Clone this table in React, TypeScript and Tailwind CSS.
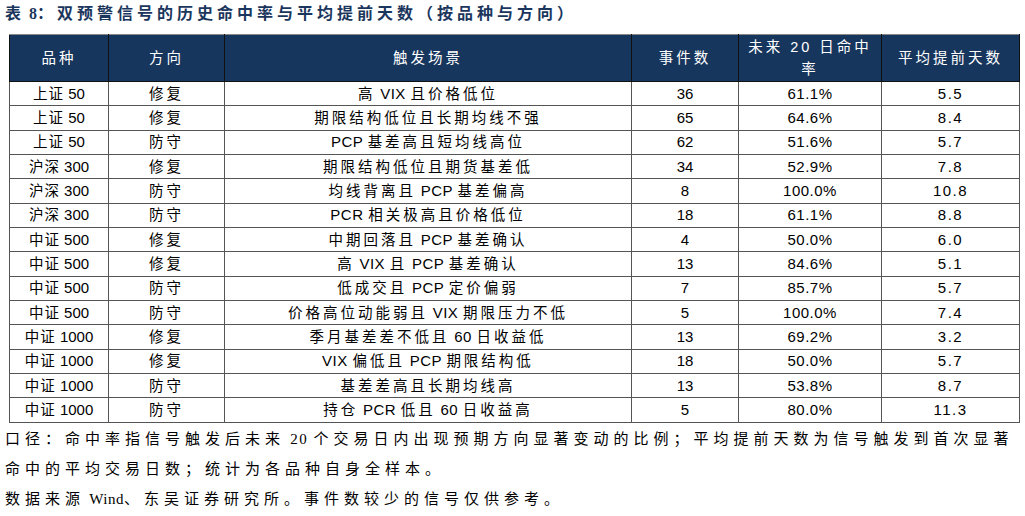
const ROWS: [string, string, string, string, string, string][] = [
  ['上证 50', '修复', '高 VIX 且价格低位', '36', '61.1%', '5.5'],
  ['上证 50', '修复', '期限结构低位且长期均线不强', '65', '64.6%', '8.4'],
  ['上证 50', '防守', 'PCP 基差高且短均线高位', '62', '51.6%', '5.7'],
  ['沪深 300', '修复', '期限结构低位且期货基差低', '34', '52.9%', '7.8'],
  ['沪深 300', '防守', '均线背离且 PCP 基差偏高', '8', '100.0%', '10.8'],
  ['沪深 300', '防守', 'PCR 相关极高且价格低位', '18', '61.1%', '8.8'],
  ['中证 500', '修复', '中期回落且 PCP 基差确认', '4', '50.0%', '6.0'],
  ['中证 500', '修复', '高 VIX 且 PCP 基差确认', '13', '84.6%', '5.1'],
  ['中证 500', '防守', '低成交且 PCP 定价偏弱', '7', '85.7%', '5.7'],
  ['中证 500', '防守', '价格高位动能弱且 VIX 期限压力不低', '5', '100.0%', '7.4'],
  ['中证 1000', '修复', '季月基差差不低且 60 日收益低', '13', '69.2%', '3.2'],
  ['中证 1000', '修复', 'VIX 偏低且 PCP 期限结构低', '18', '50.0%', '5.7'],
  ['中证 1000', '防守', '基差差高且长期均线高', '13', '53.8%', '8.7'],
  ['中证 1000', '防守', '持仓 PCR 低且 60 日收益高', '5', '80.0%', '11.3'],
]

const WIDTHS = ['w-[99px]', 'w-[116px]', 'w-[407px]', 'w-[107px]', 'w-[143px]', 'w-[138px]']

const sans = "font-['Liberation_Sans','Noto_Sans_CJK_SC',sans-serif]"
const serif = "font-['Liberation_Serif','Noto_Sans_CJK_SC',serif]"

const CJK = /([\u3000-\u303f\u4e00-\u9fff\uff00-\uffef]+)/

// only the CJK runs get letter spacing, latin stays tight
function Spaced({ text, cjk, latin = '' }: { text: string; cjk: string; latin?: string }) {
  const parts = text.split(CJK).filter(Boolean)
  return (
    <>
      {parts.map((p, i) =>
        CJK.test(p) ? (
          <span key={i} className={cjk}>{p}</span>
        ) : (
          <span key={i} className={latin}>{p}</span>
        )
      )}
    </>
  )
}

const th = 'font-normal border border-[#111] border-t-[#888] tracking-[3px]'
const td = 'border border-[#555] text-center'

export default function App() {
  return (
    <div className="w-[1025px] h-[516px] bg-white overflow-hidden text-black">
      <h1 className={`${serif} font-bold text-[16px] leading-[20px] text-[#1b365d] pl-[5px] pt-[4px] h-[34px] whitespace-nowrap`}>
        <Spaced text="表 8：双预警信号的历史命中率与平均提前天数（按品种与方向）" cjk="tracking-[4px]" />
      </h1>

      <table className={`${sans} ml-[9px] w-[1010px] table-fixed border-collapse border border-[#6b6b6b]`}>
        <colgroup>
          {WIDTHS.map((w, i) => (
            <col key={i} className={w} />
          ))}
        </colgroup>
        <thead>
          <tr className="h-[47px] bg-[#17365d] text-white text-[14.5px] leading-[22px]">
            <th className={th}>品种</th>
            <th className={th}>方向</th>
            <th className={th}>触发场景</th>
            <th className={th}>事件数</th>
            <th className={th}>
              <div className="whitespace-nowrap">
                <Spaced text="未来 20 日命中" cjk="tracking-[3px]" />
              </div>
              <div>率</div>
            </th>
            <th className={th}>平均提前天数</th>
          </tr>
        </thead>
        <tbody>
          {ROWS.map((r, i) => (
            <tr key={i} className="h-[24.35px] text-[15px] leading-[18px]">
              <td className={td}>
                <Spaced text={r[0]} cjk="text-[14.5px] tracking-[1px]" />
              </td>
              <td className={`${td} text-[14.5px] tracking-[3px]`}>{r[1]}</td>
              <td className={td}>
                <Spaced text={r[2]} cjk="text-[14.5px] tracking-[3px]" latin="tracking-[0.5px]" />
              </td>
              <td className={td}>{r[3]}</td>
              <td className={`${td} tracking-[0.5px]`}>{r[4]}</td>
              <td className={`${td} tracking-[1.5px]`}>{r[5]}</td>
            </tr>
          ))}
        </tbody>
      </table>

      <div className={`${serif} text-[15px] leading-[30px] pl-[5px] pt-[1px] whitespace-nowrap`}>
        <p>
          <Spaced
            text="口径：命中率指信号触发后未来 20 个交易日内出现预期方向显著变动的比例；平均提前天数为信号触发到首次显著"
            cjk="tracking-[5px]"
            latin="tracking-[1.5px]"
          />
        </p>
        <p>
          <Spaced text="命中的平均交易日数；统计为各品种自身全样本。" cjk="tracking-[5px]" />
        </p>
        <p>
          <Spaced text="数据来源 Wind、东吴证券研究所。事件数较少的信号仅供参考。" cjk="tracking-[5px]" latin="tracking-[0.5px]" />
        </p>
      </div>
    </div>
  )
}
